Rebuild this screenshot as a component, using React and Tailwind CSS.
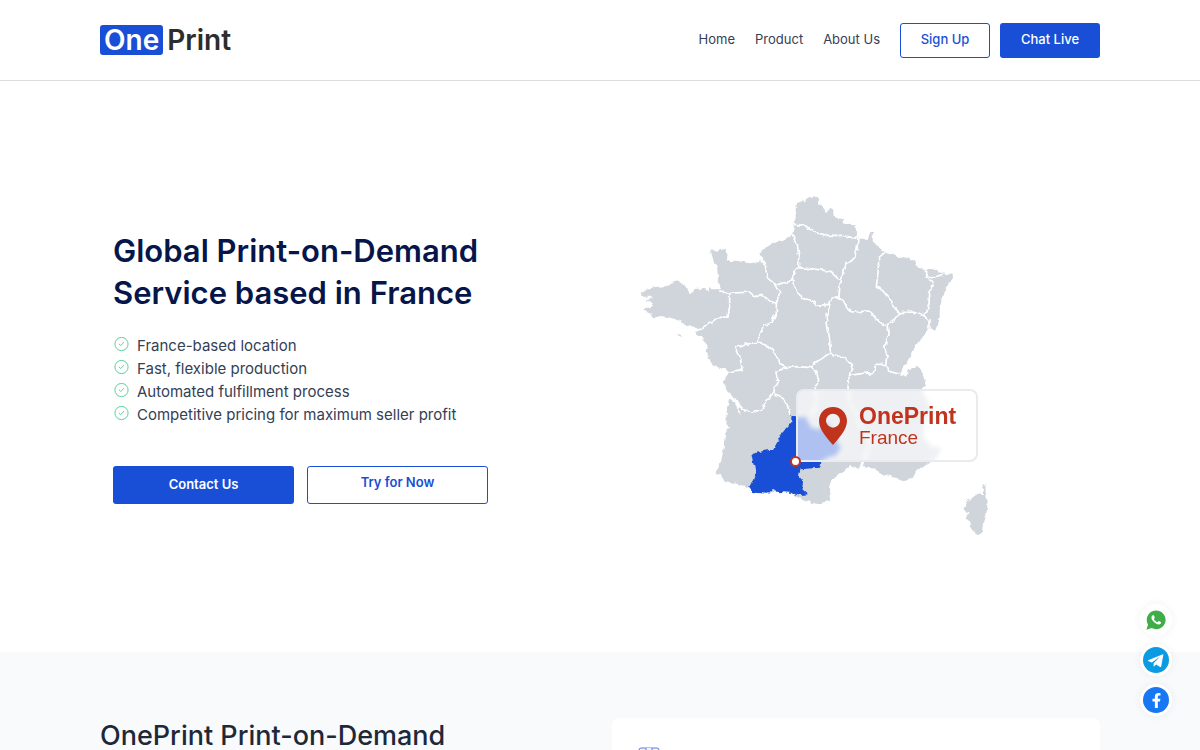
import { FaFacebookF } from 'react-icons/fa';
import { IoLogoWhatsapp } from 'react-icons/io';

const navLinks = ['Home', 'Product', 'About Us'];

const features = [
  'France-based location',
  'Fast, flexible production',
  'Automated fulfillment process',
  'Competitive pricing for maximum seller profit',
];

const mainland =
  'M498 45 510 38 530 30 560 22 568 28 568 45 580 55 592 68 602 56 610 60 617 85 640 90 645 105 675 108 682 130 685 148 715 148 722 128 730 128 729 155 745 172 770 192 785 198 820 205 832 203 855 215 865 235 888 240 925 242 935 252 960 255 974 258 965 275 948 295 942 320 930 350 930 385 925 410 915 424 898 415 885 440 865 462 850 485 842 505 825 525 812 555 830 562 838 538 870 532 878 552 888 585 875 600 890 630 905 660 885 705 880 745 905 770 937 775 925 800 895 825 860 845 850 865 820 872 780 860 750 852 730 838 700 830 685 838 660 830 645 842 615 865 602 885 600 925 605 932 570 945 545 940 510 925 480 910 430 905 415 913 370 910 360 895 340 890 310 880 280 872 275 855 255 850 270 830 280 790 288 720 302 715 290 705 292 660 298 626 312 636 324 656 333 680 328 648 312 622 295 605 282 585 284 566 300 550 285 540 250 530 245 520 228 488 235 470 218 450 222 440 200 438 198 428 220 418 190 415 165 405 135 390 100 380 68 385 62 370 40 360 70 350 68 340 45 335 70 328 65 322 35 322 35 308 55 298 80 292 118 290 125 280 150 276 165 288 180 312 200 298 228 300 235 308 240 292 245 300 275 300 268 290 262 235 250 212 243 180 265 184 288 178 290 200 297 215 320 214 360 222 390 218 400 205 388 198 400 180 430 162 465 152 487 138 495 120 490 105 498 90Z';

const corsica =
  'M1060 885 1067 885 1068 910 1074 940 1070 975 1060 1000 1056 1030 1048 1038 1030 1026 1020 1010 1024 996 1008 988 1016 970 1004 955 1010 938 1020 930 1050 912 1060 914Z';

const occitanie =
  'M485 678 510 684 530 686 545 716 565 722 585 702 612 722 620 752 632 780 612 800 572 815 570 835 510 840 505 858 520 875 518 900 535 915 505 918 480 910 445 908 430 898 415 913 370 910 358 895 370 870 378 845 370 820 365 795 400 785 430 780 440 760 455 735 470 715 485 700Z';

const borders = [
  'M490 105 520 108 540 120 560 130 590 138 640 138 685 148',
  'M487 138 503 165 507 200 507 235 560 240 600 245 625 268 632 270',
  'M685 148 682 180 672 212 650 220 645 240 632 270 630 295 628 322',
  'M507 235 488 255 490 280 505 310 520 328 545 332 560 348 600 345 605 325 628 322',
  'M628 322 645 345 665 368 720 365 740 390 760 405 775 405 790 395 810 370 850 368 885 380',
  'M765 190 747 205 745 250 740 290 760 305 785 335 798 360 810 370',
  'M888 240 888 262 910 280 900 310 898 345 885 380 898 395 898 415',
  'M888 256 900 262 925 262 938 254',
  'M775 405 778 435 765 470 772 500 768 525 740 525 730 550 700 552 660 558',
  'M768 525 775 545 812 555',
  'M600 345 590 385 595 420 600 450 602 492 640 505 668 525 660 555 655 595 662 640 690 700 720 760 695 835',
  'M395 205 408 235 412 265 435 282 450 310 440 340 440 370 425 400 400 410 385 458',
  'M435 288 485 275 488 255',
  'M270 308 300 312 360 308 375 322 400 318 420 335 440 342',
  'M300 312 300 350 295 380 260 390 235 405 218 418',
  'M385 458 345 465 318 475 330 500 338 540 300 548',
  'M385 458 430 480 450 520 468 535 500 532 545 535 555 520 580 505 602 492',
  'M468 535 442 545 445 580 428 610 395 660 365 672 330 650 318 630',
  'M545 535 562 550 567 575 555 600 560 640 545 680',
  'M428 610 455 622 472 645 482 678',
];

const CheckIcon = () => (
  <svg viewBox="0 0 16 16" className="h-4 w-4 shrink-0" fill="none" stroke="#5dcf9f" aria-hidden="true">
    <circle cx="8.500" cy="7" r="6.6" />
    <path d="M6.2 7.1 7.7 8.5 10.7 5.6" strokeLinecap="round" strokeLinejoin="round" />
  </svg>
);

const FranceMap = () => (
  <div className="relative h-[355px] w-[370px] shrink-0">
    <svg viewBox="1 -1 1110 1065" className="h-full w-full" role="img" aria-label="Map of France">
      {/* roughens the coast and the region borders */}
      <filter id="rough" x="0" y="0" width="100%" height="100%" colorInterpolationFilters="sRGB">
        <feTurbulence type="fractalNoise" baseFrequency="0.06" numOctaves="2" seed="4" result="noise" />
        <feDisplacementMap in="SourceGraphic" in2="noise" scale="14" xChannelSelector="R" yChannelSelector="G" />
      </filter>
      <g filter="url(#rough)">
        <path d={mainland} fill="#d0d5dc" />
        <path d={corsica} fill="#d0d5dc" />
        <path d="M142 434 154 436 150 442Z" fill="#d0d5dc" />
        <g fill="none" stroke="#fff" strokeWidth="5" strokeLinejoin="round">
          {borders.map((d) => (
            <path key={d} d={d} />
          ))}
        </g>
        <path d={occitanie} fill="#184fd6" />
      </g>
    </svg>

    {/* Location callout */}
    <div className="absolute left-[166px] top-[200px] flex h-[73px] w-[182px] items-center gap-3 rounded-lg rounded-bl-none border-2 border-[#e9ebef] bg-white/65 pl-[21px] backdrop-blur-[2px]">
      <svg viewBox="0 0 84 114" className="h-[38px] w-[28px] shrink-0" aria-hidden="true">
        <path
          fillRule="evenodd"
          fill="#c0331d"
          d="M42 0C18 0 0 18 0 42c0 26 25 52 42 72 17-20 42-46 42-72C84 18 66 0 42 0Zm0 20a21 21 0 1 1 0 42 21 21 0 0 1 0-42Z"
        />
      </svg>
      <div className="font-['Liberation_Sans',sans-serif] text-[#c0331d]">
        <p className="text-[23px] font-bold leading-6">OnePrint</p>
        <p className="text-[19px] leading-5">France</p>
      </div>
    </div>
    <span className="absolute left-[160px] top-[267px] h-[11px] w-[11px] rounded-full border-2 border-[#c0331d] bg-white" />
  </div>
);

const TelegramIcon = () => (
  <svg viewBox="0 0 76 76" className="h-[26px] w-[26px]" aria-hidden="true">
    <circle cx="38" cy="38" r="38" fill="#0a9be3" />
    <path fill="#fff" d="M58 21 15 38.500c-1 .5-1 2 0 2.500l11 4L50 28 31 47.500V58l7.500-7L50 58.500c1.500.8 2.800 0 3.200-1.500L59.500 23c.3-1.500-.4-2.400-1.500-2Z" />
  </svg>
);

const socials = [
  { label: 'WhatsApp', icon: <IoLogoWhatsapp className="h-[22px] w-[22px] text-[#3fae49]" /> },
  { label: 'Telegram', icon: <TelegramIcon /> },
  {
    label: 'Facebook',
    icon: (
      <span className="flex h-[26px] w-[26px] items-center justify-center rounded-full bg-[#1877f2]">
        <FaFacebookF className="h-[15px] w-[15px] text-white" />
      </span>
    ),
  },
];

const App = () => {
  return (
    <div className="flex h-screen flex-col overflow-hidden bg-white font-['Inter',sans-serif]">
      <header className="shrink-0 border-b border-[#dcdde0]">
        <div className="mx-auto flex h-20 max-w-[1000px] items-center justify-between">
          <a href="#" className="flex items-center gap-1 text-[28px] font-semibold leading-[30px]">
            <span className="rounded-[3px] bg-[#184fd6] px-1 text-white">One</span>
            <span className="text-[#2d2d2d]">Print</span>
          </a>

          <nav className="flex items-center text-[13px]">
            <div className="mr-5 flex gap-5">
              {navLinks.map((label) => (
                <a key={label} href="#" className="text-[#344054]">
                  {label}
                </a>
              ))}
            </div>
            <button className="mr-2.5 h-[35px] w-[90px] rounded-[3px] border border-[#184fd6] font-medium text-[#184fd6]">
              Sign Up
            </button>
            <button className="h-[35px] w-[100px] rounded-[3px] bg-[#184fd6] font-medium text-white">
              Chat Live
            </button>
          </nav>
        </div>
      </header>

      {/* Hero */}
      <main className="shrink-0">
        <div className="mx-auto flex h-[571px] max-w-[1000px] items-center justify-between px-[13px]">
          <div>
            <h1 className="text-[31px] font-semibold leading-[42px] text-[#06164a]">
              Global Print-on-Demand
              <br />
              Service based in France
            </h1>
            <ul className="mt-5 text-[15px] leading-[23px] text-[#344054]">
              {features.map((text) => (
                <li key={text} className="flex items-center gap-2">
                  <CheckIcon />
                  {text}
                </li>
              ))}
            </ul>
            <div className="mt-10 flex gap-[13px] text-[13px] font-semibold">
              <button className="h-[38px] w-[181px] rounded-[3px] bg-[#184fd6] text-white">Contact Us</button>
              <button className="h-[38px] w-[181px] rounded-[3px] border border-[#184fd6] pb-1 text-[#184fd6]">
                Try for Now
              </button>
            </div>
          </div>
          <div className="mr-[87px]">
            <FranceMap />
          </div>
        </div>
      </main>

      {/* Services */}
      <section className="flex-1 bg-[#f9fafc]">
        <div className="mx-auto grid max-w-[1000px] grid-cols-2 gap-6 pt-[66px]">
          <h2 className="text-[27px] font-medium leading-9 text-[#1d2939]">OnePrint Print-on-Demand</h2>
          <div className="h-40 rounded-lg bg-white px-[26px] py-[29px]">
            <svg viewBox="0 0 22 22" className="h-[22px] w-[22px]" fill="#eef3ff" stroke="#5b80dd" aria-hidden="true">
              <rect x="1" y="1" width="20" height="20" rx="2" />
              <path d="M8 1v3h6V1" />
            </svg>
          </div>
        </div>
      </section>

      {/* Contact shortcuts */}
      <div className="fixed bottom-[34px] right-7 flex flex-col gap-2">
        {socials.map(({ label, icon }) => (
          <a
            key={label}
            href="#"
            aria-label={label}
            className="flex h-8 w-8 items-center justify-center rounded-full bg-white shadow-[0_0_10px_rgba(16,24,40,0.06)]"
          >
            {icon}
          </a>
        ))}
      </div>
    </div>
  );
};

export default App;
